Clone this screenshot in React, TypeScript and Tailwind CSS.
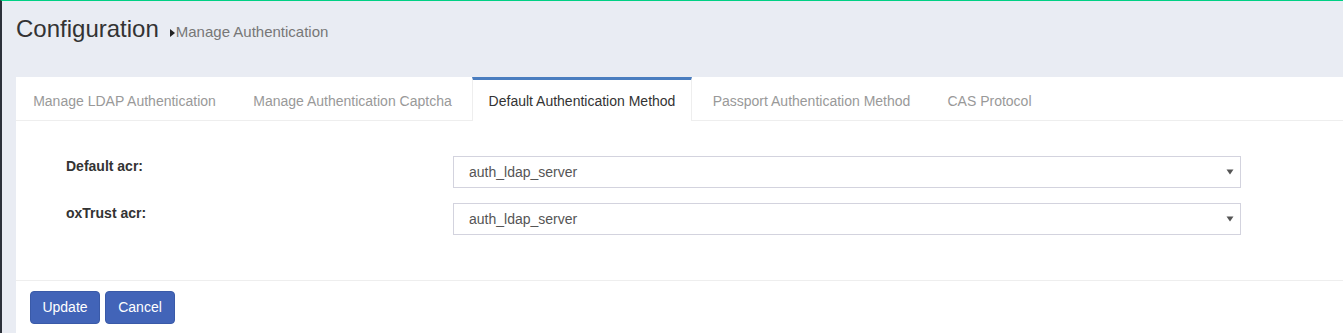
import React from "react";

const tabs = [
  { label: "Manage LDAP Authentication", w: "w-[217px]" },
  { label: "Manage Authentication Captcha", w: "w-[233px]" },
  { label: "Default Authentication Method", w: "w-[220px]", active: true },
  { label: "Passport Authentication Method", w: "w-[233px]" },
  { label: "CAS Protocol", w: "w-[117px]" },
];

function Select({ value }: { value: string }) {
  return (
    <div className="flex h-[32px] w-[788px] items-center justify-between border border-[#d3d3de] bg-white pl-[15px] pr-[6px] text-[14px] text-[#555]">
      <span>{value}</span>
      <svg width="8" height="6" viewBox="0 0 8 6" aria-hidden>
        <path d="M0.5 0.5h7L4 5.5z" fill="#555" />
      </svg>
    </div>
  );
}

function Row({ label, value }: { label: string; value: string }) {
  return (
    <div className="flex items-start">
      <div className="w-[387px] text-[14px] font-bold leading-[20px] text-[#333]">{label}</div>
      <Select value={value} />
    </div>
  );
}

export default function App() {
  return (
    <div className="min-h-[333px] border-l-2 border-t border-l-[#2c313a] border-t-[#00d084] bg-[#e9ecf3] font-['Liberation_Sans',Arial,sans-serif]">
      <div className="flex h-[76px] items-baseline pl-[14px] pt-[15px]">
        <h1 className="text-[24px] leading-[26px] text-[#333]">Configuration</h1>
        <span className="ml-[11px] flex items-baseline text-[15px] text-[#777]">
          <svg width="5" height="8" viewBox="0 0 5 8" className="mr-[1px]" aria-hidden>
            <path d="M0 0l5 4-5 4z" fill="#222" />
          </svg>
          Manage Authentication
        </span>
      </div>

      <div className="ml-[14px] bg-white">
        <div className="flex h-[44px] border-b border-[#eee]">
          {tabs.map((t) =>
            t.active ? (
              <div
                key={t.label}
                className={`${t.w} -mb-px mr-[3px] flex h-[44px] items-center justify-center border-x border-t-[3px] border-x-[#eee] border-t-[#4a7dbf] bg-white pt-[1px] text-[14px] text-[#333]`}
              >
                {t.label}
              </div>
            ) : (
              <div
                key={t.label}
                className={`${t.w} mr-[3px] flex items-center justify-center pt-[5px] text-[14px] text-[#999]`}
              >
                {t.label}
              </div>
            )
          )}
        </div>

        <div className="flex flex-col gap-[15px] pb-[45px] pl-[50px] pt-[35px]">
          <Row label="Default acr:" value="auth_ldap_server" />
          <Row label="oxTrust acr:" value="auth_ldap_server" />
        </div>

        <div className="flex gap-[5px] border-t border-[#eee] pb-[10px] pl-[14px] pt-[10px]">
          <button className="h-[33px] w-[70px] rounded-[4px] border border-[#3a5aa8] bg-[#4264b8] text-[14px] text-white">
            Update
          </button>
          <button className="h-[33px] w-[70px] rounded-[4px] border border-[#3a5aa8] bg-[#4264b8] text-[14px] text-white">
            Cancel
          </button>
        </div>
      </div>
    </div>
  );
}
